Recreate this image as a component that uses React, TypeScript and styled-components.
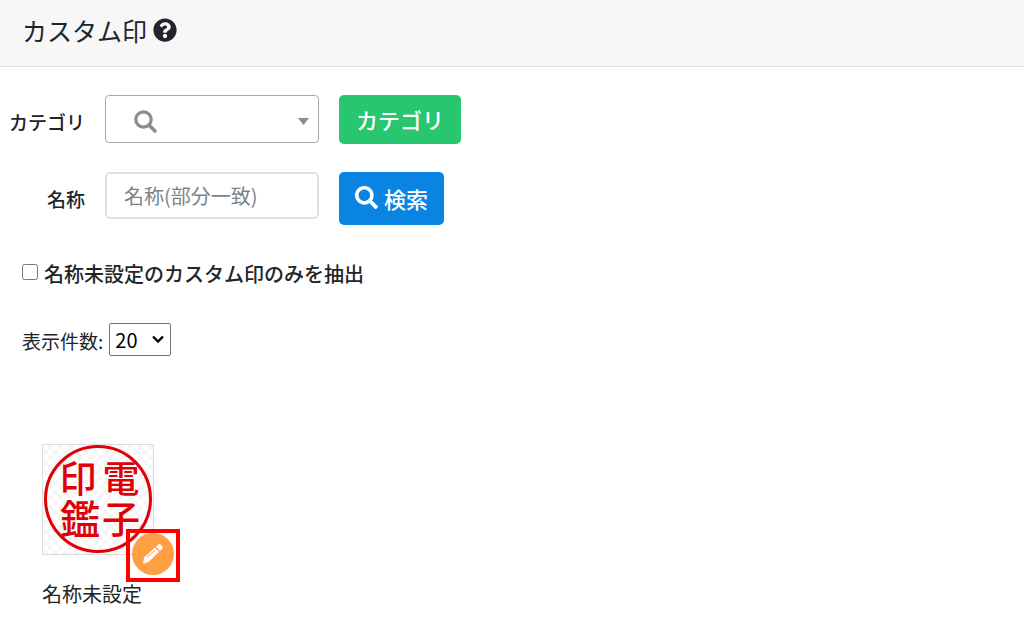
import React from "react";
import styled, { createGlobalStyle } from "styled-components";
import { FaQuestionCircle, FaSearch } from "react-icons/fa";

const GlobalStyle = createGlobalStyle`
  *, *::before, *::after { box-sizing: border-box; }
  body {
    margin: 0;
    background: #fff;
    color: #212529;
    font-family: "Noto Sans CJK JP", "Noto Sans", sans-serif;
    font-size: 20px;
    line-height: 28px;
  }
  button, input, select { font: inherit; }
`;

const Header = styled.header`
  display: flex;
  align-items: center;
  gap: 6px;
  padding: 12px 22px 18px;
  background: #f7f7f7;
  border-bottom: 1px solid #dcdcdc;
`;

const Title = styled.h1`
  margin: 0;
  font-size: 25px;
  font-weight: 400;
  line-height: 36px;
`;

const HelpButton = styled.button`
  display: flex;
  padding: 0;
  border: 0;
  background: none;
  color: #212529;
`;

const SearchForm = styled.form`
  display: grid;
  grid-template-columns: 85px 214px max-content;
  column-gap: 20px;
  row-gap: 28px;
  align-items: start;
  padding-top: 28px;
`;

const FieldLabel = styled.label`
  padding-top: 13px;
  text-align: right;
  white-space: nowrap;
  font-size: 19px;
  font-weight: 500;
`;

const SelectBox = styled.div`
  position: relative;
  color: #8c8c8c;
`;

const CategorySelect = styled.select`
  display: block;
  width: 100%;
  height: 48px;
  appearance: none;
  border: 1px solid #aaa;
  border-radius: 4px;
  background: #fff;
`;

const SelectIcon = styled.svg`
  position: absolute;
  top: 15px;
  left: 29px;
  pointer-events: none;
`;

const SelectArrow = styled.svg`
  position: absolute;
  top: 23px;
  right: 10px;
  pointer-events: none;
`;

const NameInput = styled.input`
  width: 100%;
  height: 47px;
  padding: 0 17px;
  border: 2px solid #dee2e6;
  border-radius: 5px;
  background: #fff;
  &::placeholder { color: #7b838a; opacity: 1; }
`;

const ActionButton = styled.button<{ $color: string; $tall?: boolean }>`
  display: flex;
  align-items: center;
  justify-content: center;
  justify-self: start;
  gap: 6px;
  height: ${(p) => (p.$tall ? 53 : 49)}px;
  padding: 0 ${(p) => (p.$tall ? 16 : 17)}px 2px;
  border: 0;
  border-radius: 5px;
  background: ${(p) => p.$color};
  color: #fff;
  font-size: 22px;
  font-weight: 500;
`;

const CheckRow = styled.label`
  display: flex;
  align-items: center;
  gap: 6px;
  width: max-content;
  margin: 35px 22px 0;
  font-weight: 500;
`;

const Checkbox = styled.input`
  width: 16px;
  height: 16px;
  margin: 0 0 4px;
`;

const CountRow = styled.div`
  display: flex;
  align-items: center;
  gap: 6px;
  margin: 35px 22px 0;
`;

const CountLabel = styled.label`
  padding-top: 2px;
  font-size: 19px;
`;

const CountBox = styled.div`
  position: relative;
  color: #000;
`;

const CountSelect = styled.select`
  display: block;
  width: 62px;
  height: 33px;
  padding: 0 5px;
  appearance: none;
  border: 1px solid #767676;
  border-radius: 2px;
  background: #fff;
  color: inherit;
`;

const CountArrow = styled.svg`
  position: absolute;
  top: 12px;
  right: 7px;
  pointer-events: none;
`;

const StampCard = styled.figure`
  width: max-content;
  margin: 88px 42px 0;
`;

const StampFrame = styled.div`
  position: relative;
  width: 112px;
  height: 111px;
  border: 1px solid #dcdcdc;
  background: repeating-conic-gradient(#f6f6f6 0 25%, #fff 0 50%) 0 0 / 10px 10px;
`;

const StampArt = styled.svg`
  display: block;
`;

const EditFrame = styled.div`
  position: absolute;
  top: 84px;
  left: 83px;
  display: grid;
  justify-content: center;
  width: 54px;
  height: 53px;
  border: 4px solid #f00;
`;

const EditButton = styled.button`
  display: grid;
  place-items: center;
  width: 42px;
  height: 42px;
  padding: 0;
  border: 0;
  border-radius: 50%;
  background: #ff9f43;
`;

const Caption = styled.figcaption`
  margin-top: 25px;
`;

export default function App() {
  return (
    <>
      <GlobalStyle />
      <Header>
        <Title>カスタム印</Title>
        <HelpButton type="button" aria-label="ヘルプ">
          <FaQuestionCircle size={24} />
        </HelpButton>
      </Header>
      <main>
        <SearchForm onSubmit={(e) => e.preventDefault()}>
          <FieldLabel htmlFor="category">カテゴリ</FieldLabel>
          <SelectBox>
            <CategorySelect id="category" defaultValue="">
              <option value="" aria-label="すべて" />
            </CategorySelect>
            <SelectIcon width="24" height="24" viewBox="0 0 24 24" aria-hidden="true">
              <circle cx="9.5" cy="9.5" r="7.7" fill="none" stroke="currentColor" strokeWidth="3.2" />
              <path d="M15 15 L21 21" stroke="currentColor" strokeWidth="3.6" strokeLinecap="round" />
            </SelectIcon>
            <SelectArrow width="11" height="7" viewBox="0 0 11 7" aria-hidden="true">
              <path d="M0 0H11L5.5 7Z" fill="currentColor" />
            </SelectArrow>
          </SelectBox>
          <ActionButton type="button" $color="#28c76f">カテゴリ</ActionButton>

          <FieldLabel htmlFor="name">名称</FieldLabel>
          <NameInput id="name" type="text" placeholder="名称(部分一致)" />
          <ActionButton type="submit" $color="#0984e3" $tall>
            <FaSearch size={23} />
            検索
          </ActionButton>
        </SearchForm>

        <CheckRow>
          <Checkbox type="checkbox" />
          名称未設定のカスタム印のみを抽出
        </CheckRow>

        <CountRow>
          <CountLabel htmlFor="count">表示件数:</CountLabel>
          <CountBox>
            <CountSelect id="count" defaultValue="20">
              <option>20</option>
              <option>50</option>
              <option>100</option>
            </CountSelect>
            <CountArrow width="12" height="9" viewBox="0 0 12 9" aria-hidden="true">
              <path d="M1 1.5 L6 6.5 L11 1.5" fill="none" stroke="currentColor" strokeWidth="2.4" />
            </CountArrow>
          </CountBox>
        </CountRow>

        <StampCard>
          <StampFrame>
            <StampArt width="110" height="109" viewBox="0 0 110 109" fill="#e00006">
              <circle cx="55" cy="54" r="52.5" fill="none" stroke="#e00006" strokeWidth="3" />
              <g fontWeight="500" textAnchor="middle">
                <text x="35" y="48" fontSize="37">印</text>
                <text x="78" y="48" fontSize="37">電</text>
                <text x="37" y="89" fontSize="40">鑑</text>
                <text x="78" y="88" fontSize="38">子</text>
              </g>
            </StampArt>
            <EditFrame>
              <EditButton type="button" aria-label="編集">
                <svg width="24" height="24" viewBox="0 0 24 24" aria-hidden="true">
                  <path
                    fill="#fff"
                    d="M2 22 L3 15.5 L14 5.5 L18 10 L7.5 20 Z M15 4.5 L17.5 2.5 Q18.5 1.5 19.5 2.5 L21.5 4.7 Q22.3 5.8 21.5 6.6 L19 9 Z"
                  />
                  <path d="M6 15.2 L14 8.2" stroke="#ff9f43" strokeWidth="1" />
                  <path d="M3.6 18.8 L5.2 20.4" stroke="#ff9f43" strokeWidth="1" />
                </svg>
              </EditButton>
            </EditFrame>
          </StampFrame>
          <Caption>名称未設定</Caption>
        </StampCard>
      </main>
    </>
  );
}
